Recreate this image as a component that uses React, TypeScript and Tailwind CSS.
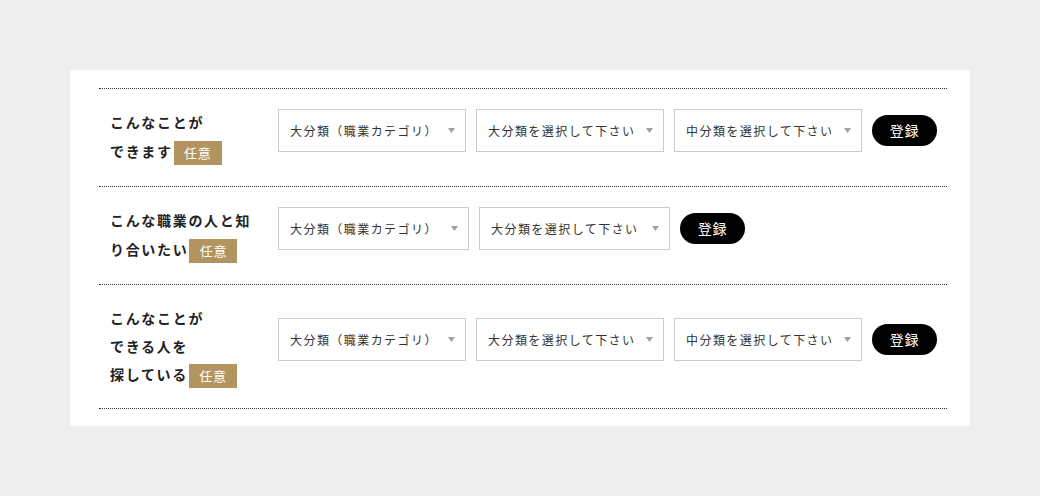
import React from "react";

type Row = {
  label: string[];
  line: string;
  selects: { text: string; w: string }[];
};

const ROWS: Row[] = [
  {
    label: ["こんなことが", "できます"],
    line: "h-[29px] leading-[29px]",
    selects: [
      { text: "大分類（職業カテゴリ）", w: "w-[188px]" },
      { text: "大分類を選択して下さい", w: "w-[188px]" },
      { text: "中分類を選択して下さい", w: "w-[188px]" },
    ],
  },
  {
    label: ["こんな職業の人と知", "り合いたい"],
    line: "h-[29px] leading-[29px]",
    selects: [
      { text: "大分類（職業カテゴリ）", w: "w-[191px]" },
      { text: "大分類を選択して下さい", w: "w-[191px]" },
    ],
  },
  {
    label: ["こんなことが", "できる人を", "探している"],
    line: "h-[28px] leading-[28px]",
    selects: [
      { text: "大分類（職業カテゴリ）", w: "w-[188px]" },
      { text: "大分類を選択して下さい", w: "w-[188px]" },
      { text: "中分類を選択して下さい", w: "w-[188px]" },
    ],
  },
];

function SelectBox({ text, w }: { text: string; w: string }) {
  return (
    <div
      className={`${w} flex h-[43px] shrink-0 items-center justify-between border border-[#cccccc] bg-white pl-[11px] pr-[10px]`}
    >
      <span className="text-[12px] tracking-[0.12em] text-[#333333]">{text}</span>
      <svg width="7" height="5" viewBox="0 0 7 5" aria-hidden>
        <path d="M0 0h7L3.5 5z" fill="#a0a0a0" />
      </svg>
    </div>
  );
}

export default function App() {
  return (
    <div
      className="min-h-[496px] bg-[#eeeeee] pt-[70px]"
      style={{ fontFamily: '"Noto Sans CJK JP", "Noto Sans", sans-serif' }}
    >
      <div className="mx-auto w-[900px] bg-white pl-[29px] pr-[23px] pt-[18px] pb-[17px]">
        <div className="border-t border-dotted border-[#333333]">
          {ROWS.map((row, i) => (
            <div key={i} className="flex border-b border-dotted border-[#333333]">
              <div className="flex w-[171px] shrink-0 items-center pl-[11px] pt-[19px] pb-[20px]">
                <p className="text-[14px] font-bold tracking-[0.12em] text-[#222222]">
                  {row.label.map((line, j) => (
                    <span key={j} className={`block whitespace-nowrap ${row.line}`}>
                      {line}
                      {j === row.label.length - 1 ? (
                        <span className="ml-[1px] inline-block h-[24px] w-[48px] bg-[#b29461] text-center align-middle text-[13px] font-normal leading-[24px] tracking-[0.05em] text-white">
                          任意
                        </span>
                      ) : null}
                    </span>
                  ))}
                </p>
              </div>
              <div className="flex flex-1 items-center gap-[10px] pb-[14px] pl-[8px]">
                {row.selects.map((s, k) => (
                  <SelectBox key={k} text={s.text} w={s.w} />
                ))}
                <button className="h-[31px] w-[65px] rounded-full bg-black text-[14px] tracking-[0.05em] text-white">
                  登録
                </button>
              </div>
            </div>
          ))}
        </div>
      </div>
    </div>
  );
}
